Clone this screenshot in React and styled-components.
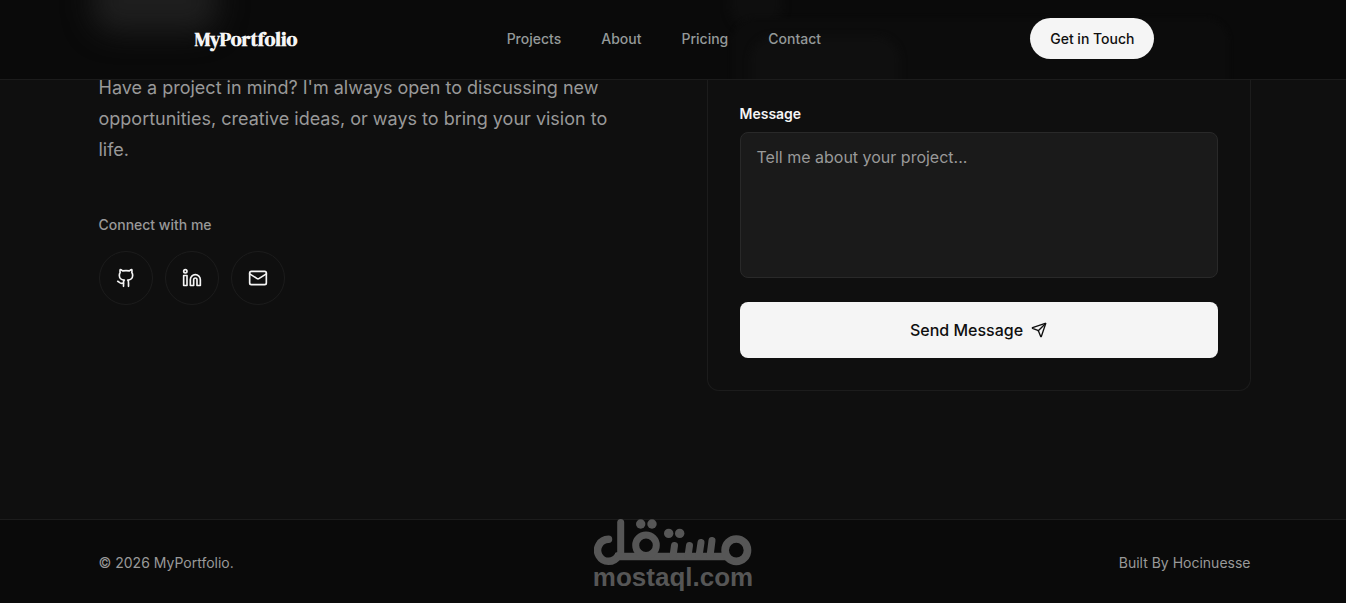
import React, { useState } from 'react';
import styled, { createGlobalStyle } from 'styled-components';
import { Github, Linkedin, Mail, Send } from 'lucide-react';

const GlobalStyle = createGlobalStyle`
  * {
    box-sizing: border-box;
  }

  body {
    margin: 0;
    background: #0f0f0f;
    color: #f5f5f5;
    font-family: Inter, "Liberation Sans", sans-serif;
  }
`;

const Header = styled.header`
  position: fixed;
  top: 0;
  left: 0;
  right: 0;
  overflow: hidden;
  padding: 18px 0 20px 3px;
  border-bottom: 1px solid #1c1c1c;
  background: #0a0a0a;
`;

const Glow = styled.span`
  position: absolute;
  top: ${(props) => props.$top}px;
  left: ${(props) => props.$left}px;
  width: ${(props) => props.$width}px;
  height: ${(props) => props.$height}px;
  border-radius: 24px;
  background: ${(props) => props.$color};
  filter: blur(${(props) => props.$blur}px);
`;

const Nav = styled.nav`
  position: relative;
  display: flex;
  align-items: center;
  justify-content: space-between;
  max-width: 960px;
  margin: 0 auto;
`;

const Logo = styled.a`
  color: #f5f5f5;
  font-family: "DM Serif Display", "Liberation Serif", serif;
  font-size: 20px;
  font-weight: 700;
  line-height: 28px;
  text-decoration: none;
`;

const NavLinks = styled.div`
  display: flex;
  gap: 40px;
`;

const NavLink = styled.a`
  color: #949999;
  font-size: 14px;
  font-weight: 500;
  line-height: 20px;
  text-decoration: none;
`;

const TouchButton = styled.button`
  border: none;
  border-radius: 21px;
  padding: 10px 20px;
  background: #f5f5f5;
  color: #0f0f0f;
  font-family: inherit;
  font-size: 14px;
  font-weight: 500;
  line-height: 21px;
  cursor: pointer;
`;

const Main = styled.main`
  padding: 72px 0 128px 3px;
`;

const Contact = styled.section`
  display: grid;
  grid-template-columns: 1fr 1fr;
  align-items: start;
  gap: 64px;
  max-width: 1152px;
  margin: 0 auto;
`;

const Intro = styled.p`
  max-width: 520px;
  margin: 0 0 50px;
  color: #999;
  font-size: 18px;
  line-height: 31px;
`;

const ConnectTitle = styled.h2`
  margin: 0 0 16px;
  color: #999;
  font-size: 14px;
  font-weight: 500;
  line-height: 20px;
`;

const Socials = styled.div`
  display: flex;
  gap: 12px;
`;

const SocialLink = styled.a`
  display: flex;
  padding: 16px;
  border: 1px solid #1c1c1c;
  border-radius: 50%;
  color: #f5f5f5;
`;

const Card = styled.form`
  display: flex;
  flex-direction: column;
  padding: 32px;
  border: 1px solid #1c1c1c;
  border-top: none;
  border-radius: 0 0 12px 12px;
`;

const Label = styled.label`
  margin-bottom: 8px;
  font-size: 14px;
  font-weight: 600;
  line-height: 20px;
`;

const TextArea = styled.textarea`
  height: 146px;
  margin-bottom: 24px;
  padding: 12px 16px;
  border: 1px solid #292929;
  border-radius: 8px;
  background: #1a1a1a;
  color: #f5f5f5;
  font-family: inherit;
  font-size: 16px;
  line-height: 24px;
  resize: none;

  &::placeholder {
    color: #999;
  }
`;

const SendButton = styled.button`
  display: flex;
  align-items: center;
  justify-content: center;
  gap: 8px;
  padding: 16px;
  border: none;
  border-radius: 8px;
  background: #f5f5f5;
  color: #0f0f0f;
  font-family: inherit;
  font-size: 16px;
  font-weight: 500;
  line-height: 24px;
  cursor: pointer;
`;

const Footer = styled.footer`
  position: relative;
  padding: 33px 0 30px 3px;
  border-top: 1px solid #1c1c1c;
  background: #0a0a0a;
`;

const FooterRow = styled.div`
  display: flex;
  justify-content: space-between;
  max-width: 1152px;
  margin: 0 auto;
  color: #999;
  font-size: 14px;
  line-height: 20px;
`;

const Watermark = styled.div`
  position: absolute;
  top: -2px;
  left: 0;
  right: 0;
  display: flex;
  flex-direction: column;
  align-items: center;
  color: #565656;
  font-family: "Liberation Sans", sans-serif;
  font-size: 26px;
  font-weight: 700;
  line-height: 22px;
  pointer-events: none;
`;

const navItems = ['Projects', 'About', 'Pricing', 'Contact'];

const socials = [
  { name: 'GitHub', icon: Github },
  { name: 'LinkedIn', icon: Linkedin },
  { name: 'Email', icon: Mail },
];

function MostaqlMark() {
  return (
    <svg width="158" height="48" viewBox="24 13 158 48" fill="none" stroke="currentColor" strokeWidth="7" strokeLinecap="round">
      <path strokeWidth="7.5" d="M38.500 34.300A11 11 0 1 0 48 51" />
      <path d="M50.700 17.500V50" />
      <path strokeWidth="7.5" strokeLinecap="butt" d="M45 51.500H158" />
      <circle cx="76" cy="40.300" r="10.300" />
      <circle cx="166.300" cy="45.200" r="11.200" strokeWidth="7.700" />
      <path d="M104.500 40.500L103 51M119.500 40.500L118 51M131 37.500L129 51M142 35.500L140 51" />
      <g fill="currentColor" stroke="none">
        <circle cx="70.700" cy="19" r="4.700" />
        <circle cx="82" cy="19" r="4.700" />
        <circle cx="98.700" cy="28.400" r="4.700" />
        <circle cx="109.700" cy="28.400" r="4.700" />
      </g>
    </svg>
  );
}

function App() {
  const [message, setMessage] = useState('');

  return (
    <>
      <GlobalStyle />
      <Header>
        <Glow $top={-30} $left={92} $width={126} $height={62} $blur={14} $color="#1e1e1e" />
        <Glow $top={-30} $left={730} $width={52} $height={60} $blur={4} $color="#0e0e0e" />
        <Glow $top={18} $left={732} $width={497} $height={90} $blur={2} $color="#0c0c0c" />
        <Glow $top={36} $left={750} $width={150} $height={70} $blur={3} $color="#0f0f0f" />
        <Nav>
          <Logo href="#home">MyPortfolio</Logo>
          <NavLinks>
            {navItems.map((item) => (
              <NavLink key={item} href={`#${item.toLowerCase()}`}>{item}</NavLink>
            ))}
          </NavLinks>
          <TouchButton type="button">Get in Touch</TouchButton>
        </Nav>
      </Header>
      <Main>
        <Contact id="contact">
          <div>
            <Intro>
              Have a project in mind? I'm always open to discussing new opportunities, creative ideas, or ways to bring your vision to life.
            </Intro>
            <ConnectTitle>Connect with me</ConnectTitle>
            <Socials>
              {socials.map(({ name, icon: Icon }) => (
                <SocialLink key={name} href={`#${name.toLowerCase()}`} aria-label={name}>
                  <Icon size={20} />
                </SocialLink>
              ))}
            </Socials>
          </div>
          <Card onSubmit={(e) => e.preventDefault()}>
            <Label htmlFor="message">Message</Label>
            <TextArea
              id="message"
              placeholder="Tell me about your project..."
              value={message}
              onChange={(e) => setMessage(e.target.value)}
            />
            <SendButton type="submit">
              Send Message
              <Send size={16} />
            </SendButton>
          </Card>
        </Contact>
      </Main>
      <Footer>
        <FooterRow>
          <span>© 2026 MyPortfolio.</span>
          <span>Built By Hocinuesse</span>
        </FooterRow>
        <Watermark>
          <MostaqlMark />
          mostaql.com
        </Watermark>
      </Footer>
    </>
  );
}

export default App;
